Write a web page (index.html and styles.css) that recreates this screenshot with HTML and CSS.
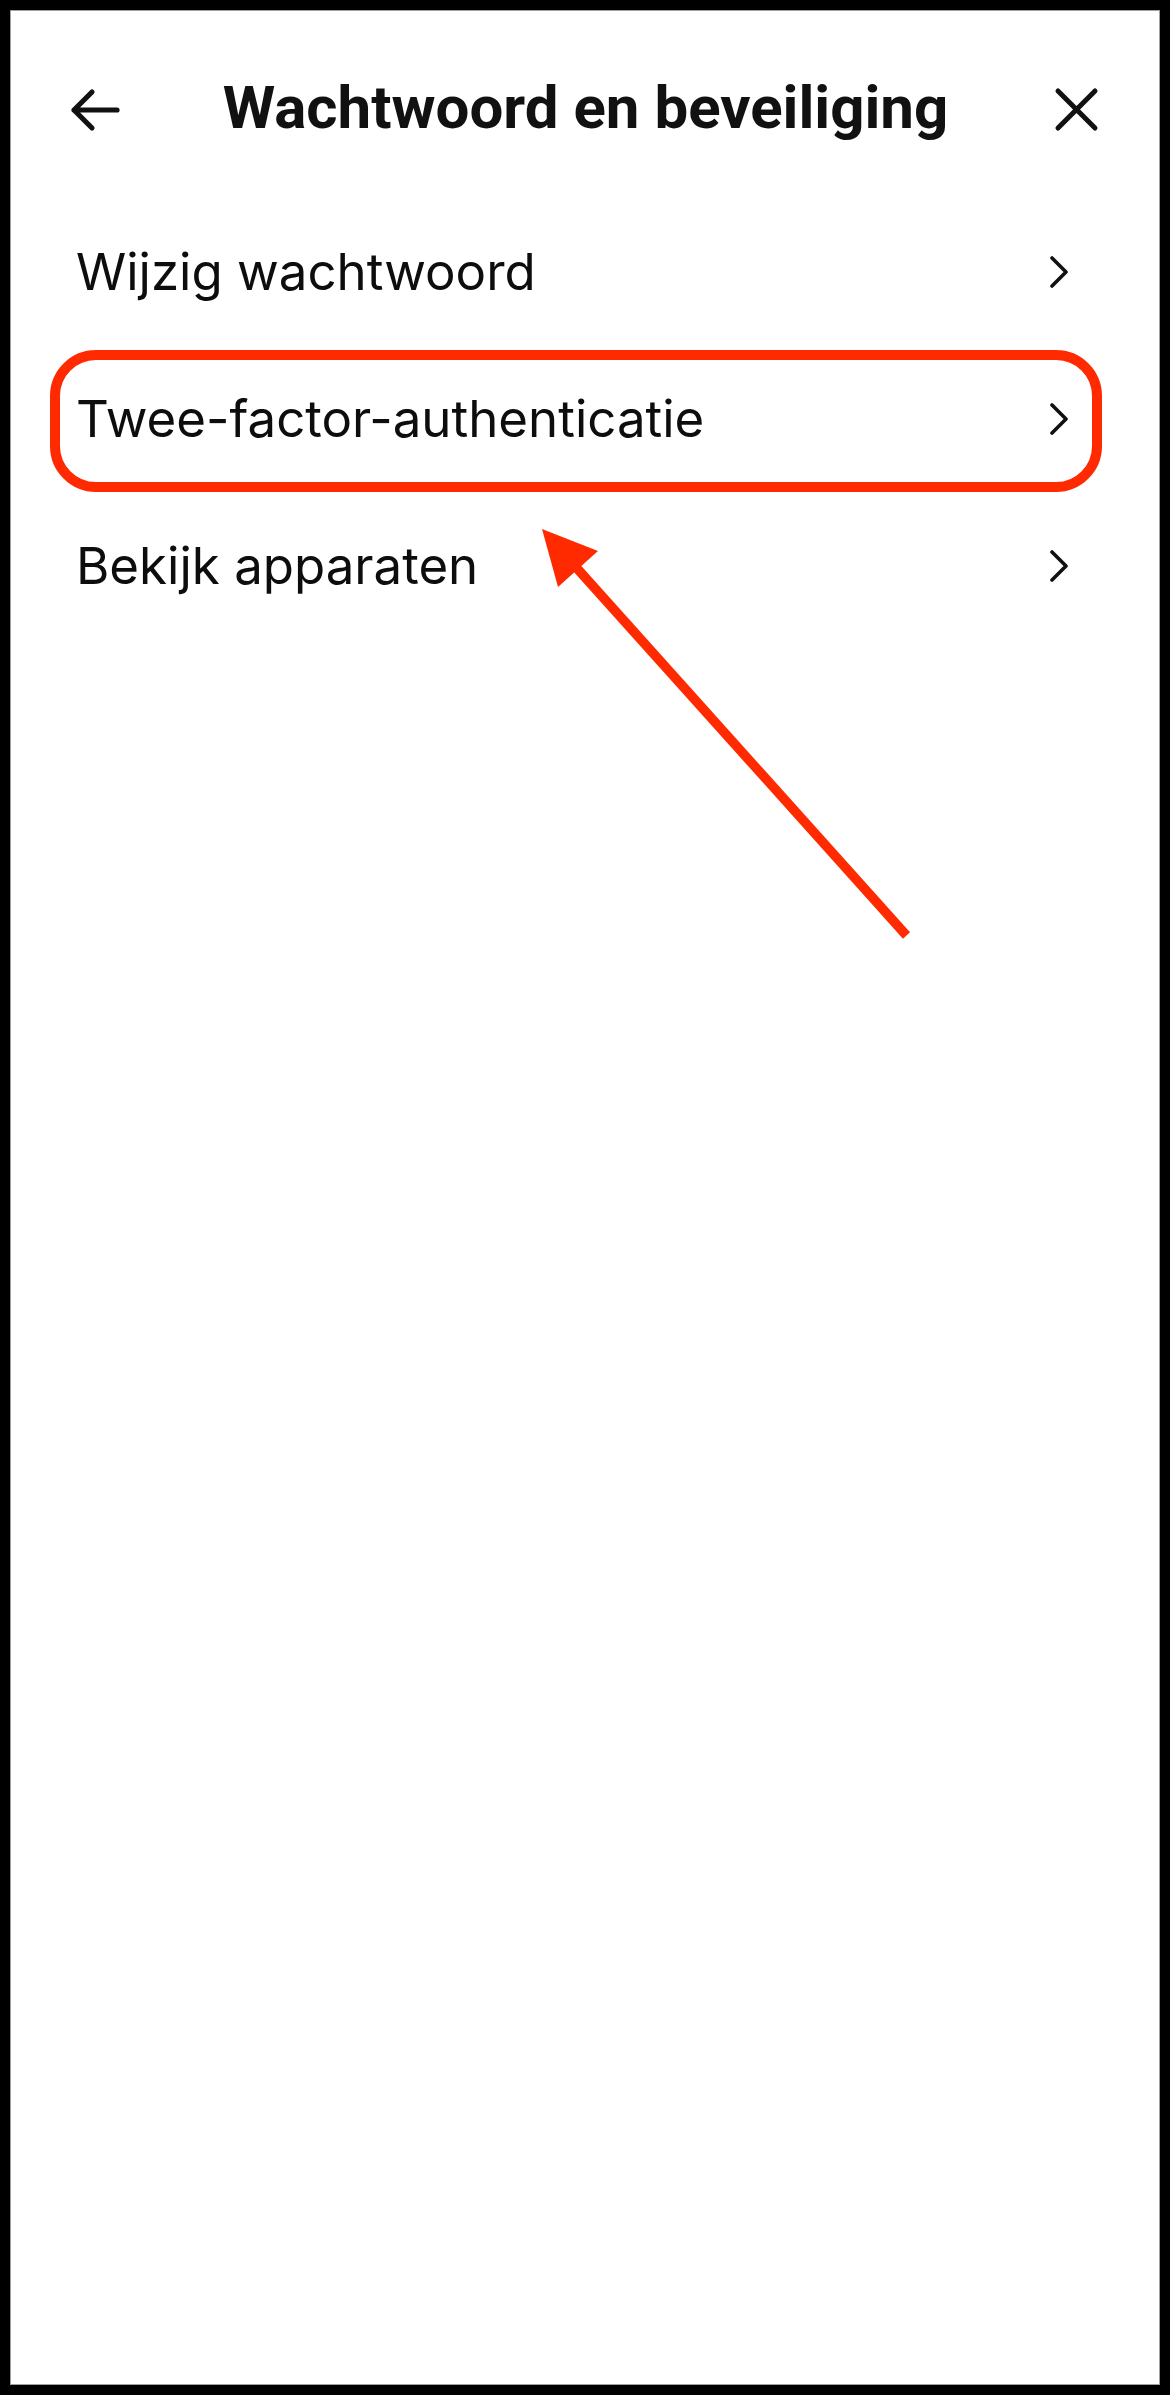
FILE: index.html
```html
<!DOCTYPE html>
<html lang="nl">
<head>
<meta charset="utf-8">
<title>Wachtwoord en beveiliging</title>
<link rel="stylesheet" href="styles.css">
</head>
<body>
<div class="frame">
  <header class="header">
    <svg class="icon-back" width="50" height="50" viewBox="0 0 50 50" aria-hidden="true">
      <path d="M4 25 H47 M22 7 L4 25 L22 43" fill="none" stroke="#111" stroke-width="5.2" stroke-linecap="round" stroke-linejoin="round"/>
    </svg>
    <h1 class="title">Wachtwoord en beveiliging</h1>
    <svg class="icon-close" width="50" height="50" viewBox="0 0 50 50" aria-hidden="true">
      <path d="M7 6 L44 43 M44 6 L7 43" fill="none" stroke="#111" stroke-width="5" stroke-linecap="round"/>
    </svg>
  </header>
  <ul class="menu">
    <li class="row">
      <span class="label">Wijzig wachtwoord</span>
      <svg class="chev" width="20" height="32" viewBox="0 0 20 32" aria-hidden="true"><path d="M3 2 L17 16 L3 30" fill="none" stroke="#111" stroke-width="3.6" stroke-linecap="round" stroke-linejoin="round"/></svg>
    </li>
    <li class="row row-highlight">
      <span class="label">Twee-factor-authenticatie</span>
      <svg class="chev" width="20" height="32" viewBox="0 0 20 32" aria-hidden="true"><path d="M3 2 L17 16 L3 30" fill="none" stroke="#111" stroke-width="3.6" stroke-linecap="round" stroke-linejoin="round"/></svg>
      <span class="highlight-box"></span>
    </li>
    <li class="row">
      <span class="label">Bekijk apparaten</span>
      <svg class="chev" width="20" height="32" viewBox="0 0 20 32" aria-hidden="true"><path d="M3 2 L17 16 L3 30" fill="none" stroke="#111" stroke-width="3.6" stroke-linecap="round" stroke-linejoin="round"/></svg>
    </li>
  </ul>
  <svg class="pointer" width="390" height="430" viewBox="0 0 390 430" aria-hidden="true">
    <line x1="44" y1="45" x2="376.5" y2="415.5" stroke="#ff2a00" stroke-width="9.5"/>
    <polygon points="12,9 68,31 28,67" fill="#ff2a00"/>
  </svg>
</div>
</body>
</html>
```

FILE: styles.css
```css
html, body {
  margin: 0;
  padding: 0;
  background: #fff;
}

.frame {
  position: relative;
  width: 1170px;
  height: 2395px;
  box-sizing: border-box;
  border: 10px solid #000;
  background: #fff;
  box-shadow: inset 0 0 0 1px #a0a0a0;
  overflow: hidden;
}

.header {
  display: flex;
  align-items: center;
  justify-content: space-between;
  height: 176px;
  padding: 12px 59px 0 60px;
}

.icon-back,
.icon-close {
  display: block;
  flex: 0 0 auto;
}

.title {
  flex: 1;
  margin: 0 0 5px 0;
  text-align: center;
  font-family: Roboto, "Liberation Sans", sans-serif;
  font-weight: 700;
  font-size: 60px;
  line-height: 1;
  color: #111;
  letter-spacing: 0;
}

.menu {
  list-style: none;
  margin: 0;
  padding: 0;
}

.row {
  position: relative;
  display: flex;
  align-items: center;
  justify-content: space-between;
  height: 147px;
  padding: 0 91px 0 66px;
  font-family: Inter, "Noto Sans", sans-serif;
  font-size: 51px;
  color: #0d0d0d;
}

.label {
  line-height: normal;
}

.chev {
  display: block;
  flex: 0 0 auto;
}

.highlight-box {
  position: absolute;
  top: 5px;
  bottom: 0;
  left: 40px;
  right: 58px;
  border: 10px solid #ff2a00;
  border-radius: 46px;
  pointer-events: none;
}

.pointer {
  position: absolute;
  left: 520px;
  top: 510px;
}
```
